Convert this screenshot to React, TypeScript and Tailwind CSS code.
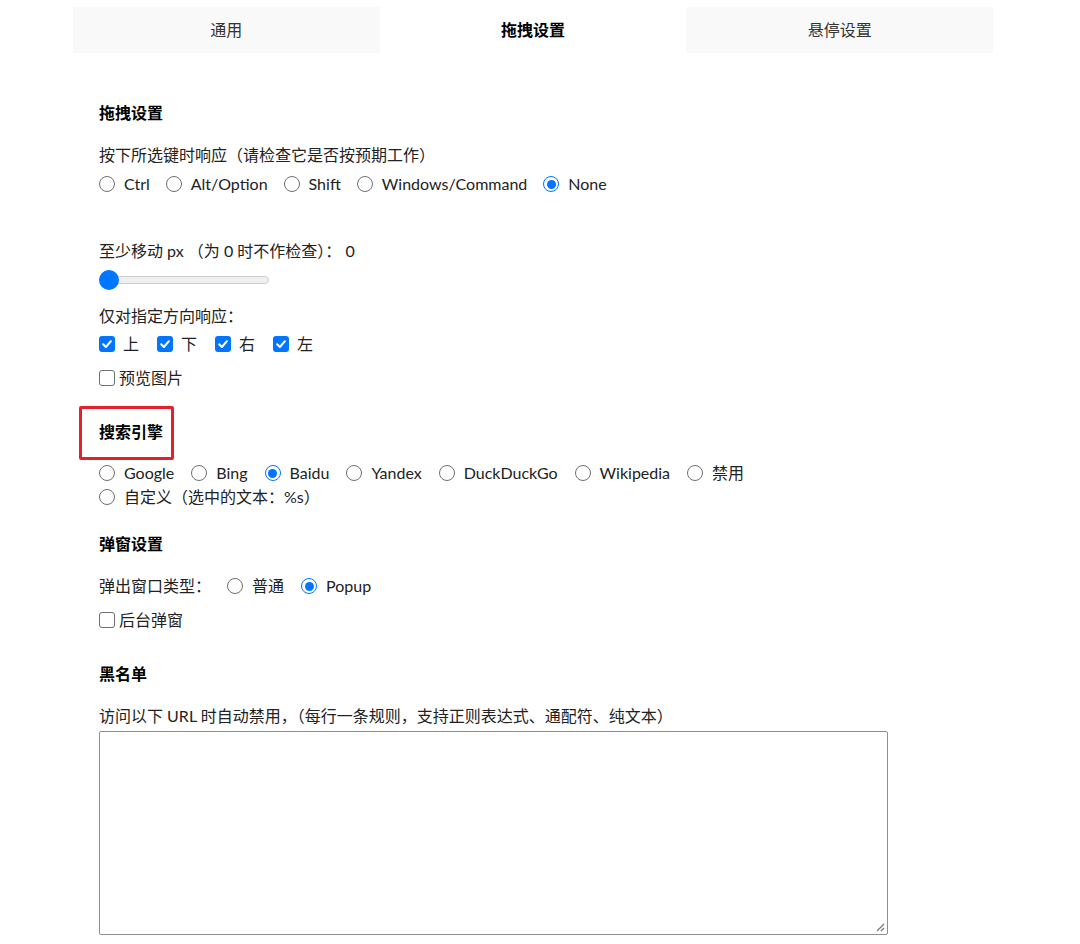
import React from "react";

const FONT = { fontFamily: 'Lato, "Noto Sans CJK SC", "Noto Sans", sans-serif' };

function Radio({ label, checked = false }: { label: string; checked?: boolean }) {
  return (
    <span className="flex items-center">
      {checked ? (
        <span className="flex h-[16px] w-[16px] items-center justify-center rounded-full border-[1.5px] border-[#0075ff] bg-white">
          <span className="h-[9px] w-[9px] rounded-full bg-[#0075ff]" />
        </span>
      ) : (
        <span className="h-[16px] w-[16px] rounded-full border-[1.3px] border-[#6f6f6f] bg-white" />
      )}
      <span className="ml-[9px]">{label}</span>
    </span>
  );
}

function Check({ label, checked = false, gap = "ml-[8px]" }: { label: string; checked?: boolean; gap?: string }) {
  return (
    <span className="flex items-center">
      {checked ? (
        <span className="flex h-[16px] w-[16px] items-center justify-center rounded-[3px] bg-[#0075ff]">
          <svg width="12" height="12" viewBox="0 0 12 12" fill="none">
            <path d="M2.2 6.3 L4.9 9 L9.9 3.2" stroke="white" strokeWidth="2" strokeLinecap="round" strokeLinejoin="round" />
          </svg>
        </span>
      ) : (
        <span className="h-[16px] w-[16px] rounded-[3px] border-[1.3px] border-[#6f6f6f] bg-white" />
      )}
      <span className={gap}>{label}</span>
    </span>
  );
}

function Heading({ children }: { children: React.ReactNode }) {
  return <div className="flex h-6 items-center font-bold text-black">{children}</div>;
}

function Row({ children, className = "" }: { children: React.ReactNode; className?: string }) {
  return <div className={`flex h-6 items-center ${className}`}>{children}</div>;
}

export default function App() {
  const tabs = [
    { name: "通用", active: false },
    { name: "拖拽设置", active: true },
    { name: "悬停设置", active: false },
  ];

  return (
    <div className="min-h-[944px] w-[1080px] bg-white text-[16px] text-[#222]" style={FONT}>
      <div className="ml-[73px] w-[920px] pt-[7px]">
        {/* 标签页 */}
        <div className="grid h-[46px] grid-cols-3">
          {tabs.map((t) => (
            <div
              key={t.name}
              className={`flex items-center justify-center ${
                t.active ? "bg-white font-bold text-black" : "bg-[#f9f9f9] text-[#333]"
              }`}
            >
              {t.name}
            </div>
          ))}
        </div>

        <div className="flex flex-col pl-[26px]">
          {/* 拖拽设置 */}
          <div className="mt-[48px]">
            <Heading>拖拽设置</Heading>
          </div>
          <Row className="mt-[18px]">按下所选键时响应（请检查它是否按预期工作）</Row>
          <Row className="mt-[5px] gap-[16px]">
            <Radio label="Ctrl" />
            <Radio label="Alt/Option" />
            <Radio label="Shift" />
            <Radio label="Windows/Command" />
            <Radio label="None" checked />
          </Row>

          <Row className="mt-[43px]">至少移动 px （为 0 时不作检查）： 0</Row>
          <Row className="mt-[5px]">
            <div className="relative flex h-[20px] w-[170px] items-center">
              <div className="h-[8px] w-full rounded-full border border-[#cfcfcf] bg-[#efefef]" />
              <div className="absolute left-0 top-0 h-[20px] w-[20px] rounded-full bg-[#0075ff]" />
            </div>
          </Row>

          <Row className="mt-[12px]">仅对指定方向响应：</Row>
          <Row className="mt-[4px] gap-[18px]">
            <Check label="上" checked />
            <Check label="下" checked />
            <Check label="右" checked />
            <Check label="左" checked />
          </Row>
          <Row className="mt-[10px]">
            <Check label="预览图片" gap="ml-[4px]" />
          </Row>

          {/* 搜索引擎 */}
          <div className="relative mt-[30px]">
            <Heading>搜索引擎</Heading>
            <div className="absolute left-[-20px] top-[-14px] h-[54px] w-[95px] rounded-[2px] border-[3px] border-[#e5202a]" />
          </div>
          <Row className="mt-[17px] gap-[17px]">
            <Radio label="Google" />
            <Radio label="Bing" />
            <Radio label="Baidu" checked />
            <Radio label="Yandex" />
            <Radio label="DuckDuckGo" />
            <Radio label="Wikipedia" />
            <Radio label="禁用" />
          </Row>
          <Row>
            <Radio label="自定义（选中的文本：%s）" />
          </Row>

          {/* 弹窗设置 */}
          <div className="mt-[23px]">
            <Heading>弹窗设置</Heading>
          </div>
          <Row className="mt-[18px] gap-[17px]">
            <span className="mr-[-1px]">弹出窗口类型：</span>
            <Radio label="普通" />
            <Radio label="Popup" checked />
          </Row>
          <Row className="mt-[10px]">
            <Check label="后台弹窗" gap="ml-[4px]" />
          </Row>

          {/* 黑名单 */}
          <div className="mt-[30px]">
            <Heading>黑名单</Heading>
          </div>
          <Row className="mt-[18px]">访问以下 URL 时自动禁用，（每行一条规则，支持正则表达式、通配符、纯文本）</Row>
          <div className="relative mt-[3px] h-[204px] w-[789px] rounded-[2px] border border-[#8f8f8f] bg-white">
            <svg className="absolute bottom-[2px] right-[2px]" width="10" height="10" viewBox="0 0 10 10">
              <path d="M9 2 L2 9 M9 6 L6 9" stroke="#777" strokeWidth="1.2" />
            </svg>
          </div>
        </div>
      </div>
    </div>
  );
}
